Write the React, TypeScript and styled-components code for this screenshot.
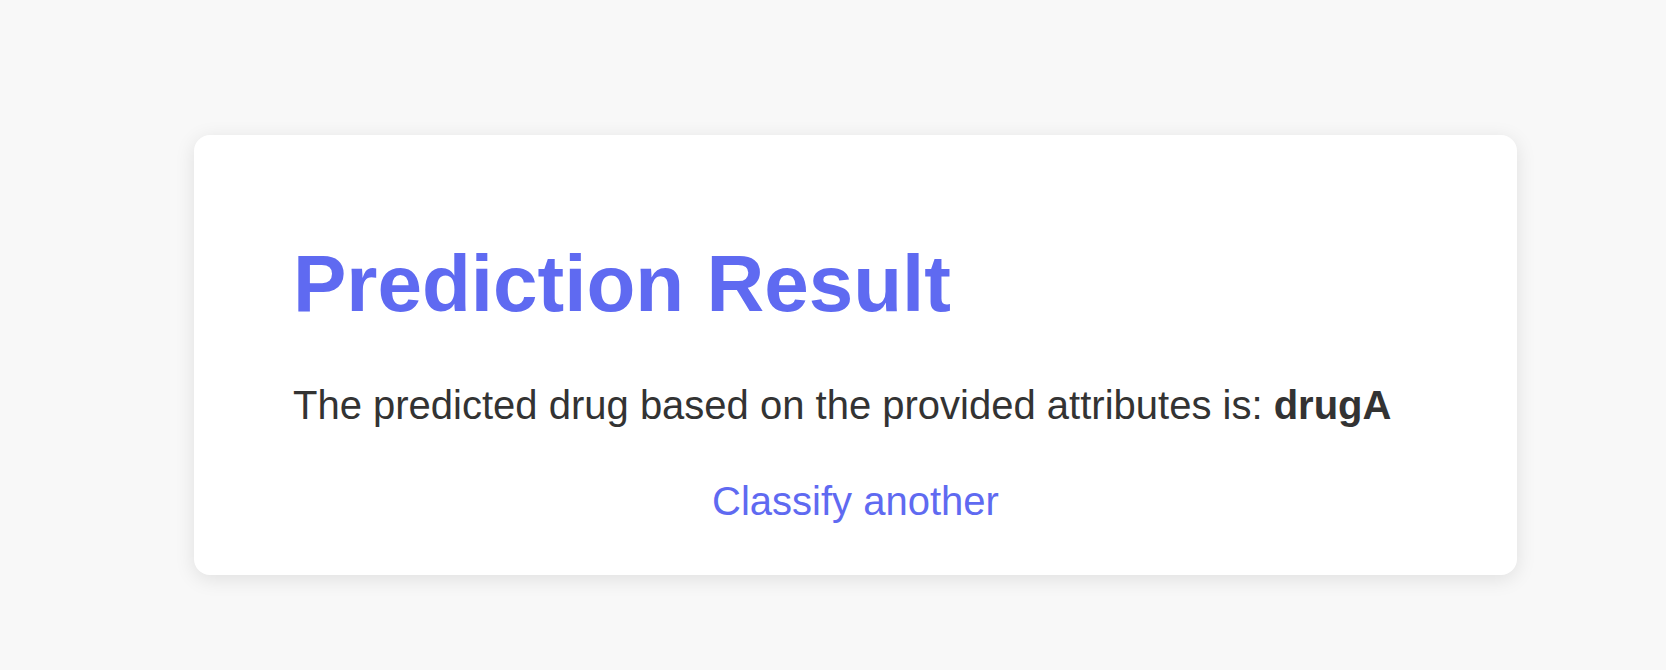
import React from "react";
import styled, { createGlobalStyle } from "styled-components";

const GlobalStyle = createGlobalStyle`
  html, body {
    margin: 0;
    padding: 0;
    background: #f8f8f8;
    font-family: "Liberation Sans", Arial, sans-serif;
  }
`;

const Page = styled.main`
  min-height: 670px;
  box-sizing: border-box;
  padding: 135px 0 0 45px;
  display: flex;
  justify-content: center;
`;

const Card = styled.section`
  width: 1323px;
  height: 440px;
  box-sizing: border-box;
  padding: 103px 99px 0;
  background: #ffffff;
  border-radius: 16px;
  box-shadow: 0 4px 20px rgba(0, 0, 0, 0.1);
`;

const Title = styled.h1`
  margin: 0;
  font-size: 80px;
  font-weight: 700;
  color: #5f6af1;
`;

const Message = styled.p`
  margin: 53px 0 0;
  font-size: 40px;
  color: #333333;

  strong {
    font-weight: 700;
  }
`;

const Actions = styled.div`
  margin-top: 51px;
  display: flex;
  justify-content: center;
`;

const Link = styled.a`
  font-size: 40px;
  color: #5f6af1;
  text-decoration: none;
  cursor: pointer;
`;

function App() {
  return (
    <>
      <GlobalStyle />
      <Page>
        <Card>
          <Title>Prediction Result</Title>
          <Message>
            The predicted drug based on the provided attributes is:{" "}
            <strong>drugA</strong>
          </Message>
          <Actions>
            <Link href="#">Classify another</Link>
          </Actions>
        </Card>
      </Page>
    </>
  );
}

export default App;
